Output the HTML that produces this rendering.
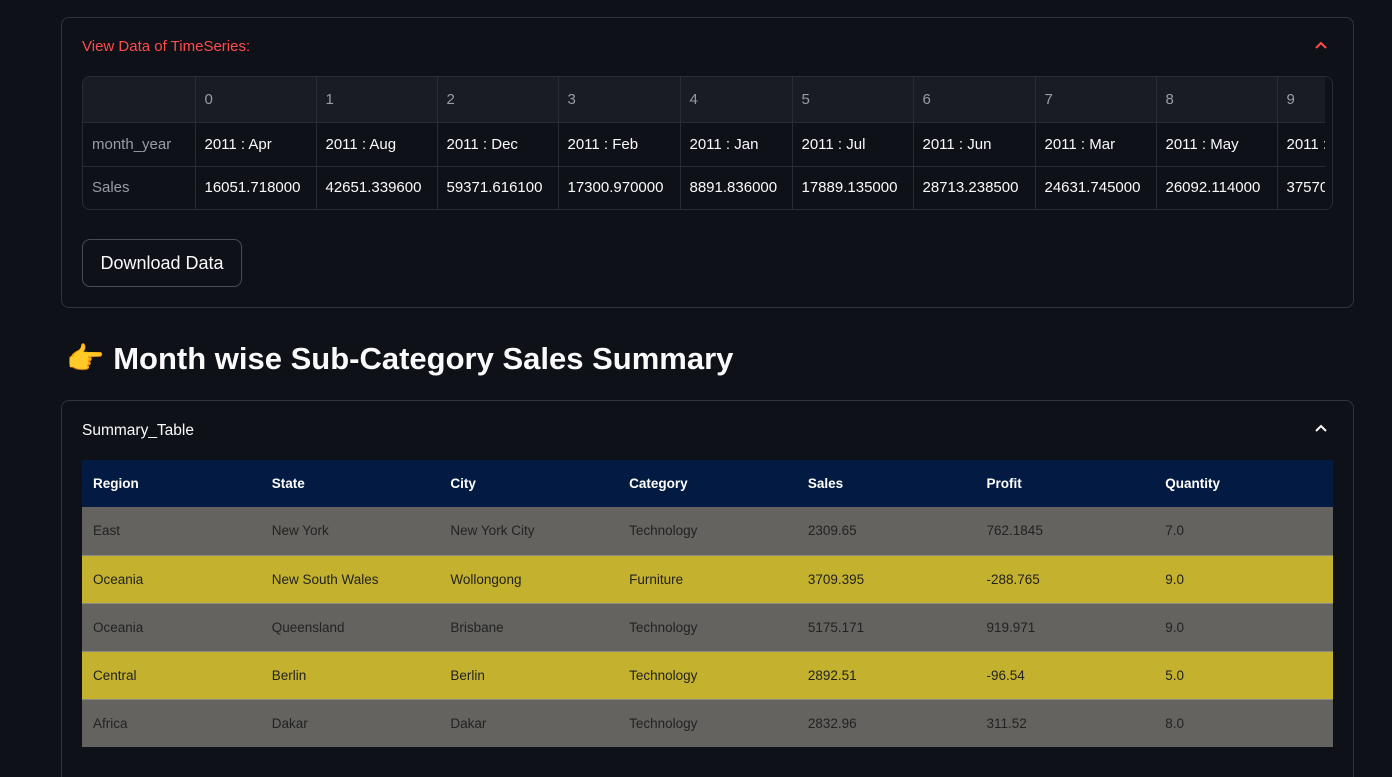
<!DOCTYPE html>
<html><head><meta charset="utf-8"><style>
*{box-sizing:border-box;margin:0;padding:0}
html,body{width:1392px;height:777px;overflow:hidden}
body{background:#0e1117;font-family:"Liberation Sans",sans-serif;color:#fafafa;position:relative}
.exp{position:absolute;left:61px;width:1293px;border:1px solid #31333f;border-radius:8px}
.chev{position:absolute;right:26px;width:12px;height:12px}
.dt{position:absolute;left:82px;top:76px;width:1251px;height:134px;border:1px solid #2a2c35;border-radius:8px;overflow:hidden;background:#0e1117}
.dt table{border-collapse:collapse;font-size:15px;position:absolute;left:0;top:0;table-layout:fixed;width:1305px}
.dt td{border-right:1px solid #2a2c35;border-bottom:1px solid #2a2c35;padding:0 9px;white-space:nowrap;overflow:hidden}
.dt tr.h td{background:#1a1c24;color:#9a9ca3;height:45px}
.dt tr.r1 td{height:44px}.dt tr.r2 td{height:43px;border-bottom:none}
.dt td.i{color:#9a9ca3}
.btn{position:absolute;left:82px;top:239px;width:160px;height:48px;border:1px solid #4a4c55;border-radius:8px;font-size:18px;display:flex;align-items:center;justify-content:center}
h1{position:absolute;left:66px;top:340px;font-size:31px;font-weight:bold;white-space:nowrap}
.st{position:absolute;left:82px;top:460px;width:1251px;border-collapse:collapse;font-size:13.5px;table-layout:fixed}
.st th{background:#031b42;color:#fff;text-align:left;font-weight:bold;height:47px;padding-left:11px}
.st td{height:48px;padding-left:11px;color:#222;border-top:1px solid #8a8a86}
.g td{background:#64635f}.y td{background:#c4b22f}
</style></head><body>
<div class="exp" style="top:17px;height:291px">
 <div style="position:absolute;left:20px;top:20px;font-size:15px;color:#ff4b4b">View Data of TimeSeries:</div>
 <svg class="chev" style="top:22px" viewBox="0 0 12 12"><path d="M1 8 L6 3 L11 8" fill="none" stroke="#ff4b4b" stroke-width="2"/></svg>
</div>
<div class="dt"><table>
<colgroup><col style="width:112px"><col style="width:121px"><col style="width:121px"><col style="width:121px"><col style="width:122px"><col style="width:112px"><col style="width:121px"><col style="width:122px"><col style="width:121px"><col style="width:121px"><col style="width:111px"></colgroup>
<tr class="h"><td></td><td>0</td><td>1</td><td>2</td><td>3</td><td>4</td><td>5</td><td>6</td><td>7</td><td>8</td><td>9</td></tr>
<tr class="r1"><td class="i">month_year</td><td>2011 : Apr</td><td>2011 : Aug</td><td>2011 : Dec</td><td>2011 : Feb</td><td>2011 : Jan</td><td>2011 : Jul</td><td>2011 : Jun</td><td>2011 : Mar</td><td>2011 : May</td><td>2011 : Nov</td></tr>
<tr class="r2"><td class="i">Sales</td><td>16051.718000</td><td>42651.339600</td><td>59371.616100</td><td>17300.970000</td><td>8891.836000</td><td>17889.135000</td><td>28713.238500</td><td>24631.745000</td><td>26092.114000</td><td>37570.000000</td></tr>
</table><div style="position:absolute;right:0;top:0;width:7px;height:134px;background:#0e1117"></div></div>
<div class="btn">Download Data</div>
<h1><span style="font-family:'Noto Color Emoji',sans-serif">👉</span> Month wise Sub-Category Sales Summary</h1>
<div class="exp" style="top:400px;height:390px">
 <div style="position:absolute;left:20px;top:21px;font-size:15.5px">Summary_Table</div>
 <svg class="chev" style="top:22px" viewBox="0 0 12 12"><path d="M1 8 L6 3 L11 8" fill="none" stroke="#fafafa" stroke-width="2"/></svg>
</div>
<table class="st">
<tr><th>Region</th><th>State</th><th>City</th><th>Category</th><th>Sales</th><th>Profit</th><th>Quantity</th></tr>
<tr class="g"><td style="border-top:none">East</td><td style="border-top:none">New York</td><td style="border-top:none">New York City</td><td style="border-top:none">Technology</td><td style="border-top:none">2309.65</td><td style="border-top:none">762.1845</td><td style="border-top:none">7.0</td></tr>
<tr class="y"><td>Oceania</td><td>New South Wales</td><td>Wollongong</td><td>Furniture</td><td>3709.395</td><td>-288.765</td><td>9.0</td></tr>
<tr class="g"><td>Oceania</td><td>Queensland</td><td>Brisbane</td><td>Technology</td><td>5175.171</td><td>919.971</td><td>9.0</td></tr>
<tr class="y"><td>Central</td><td>Berlin</td><td>Berlin</td><td>Technology</td><td>2892.51</td><td>-96.54</td><td>5.0</td></tr>
<tr class="g"><td>Africa</td><td>Dakar</td><td>Dakar</td><td>Technology</td><td>2832.96</td><td>311.52</td><td>8.0</td></tr>
</table>
</body></html>
